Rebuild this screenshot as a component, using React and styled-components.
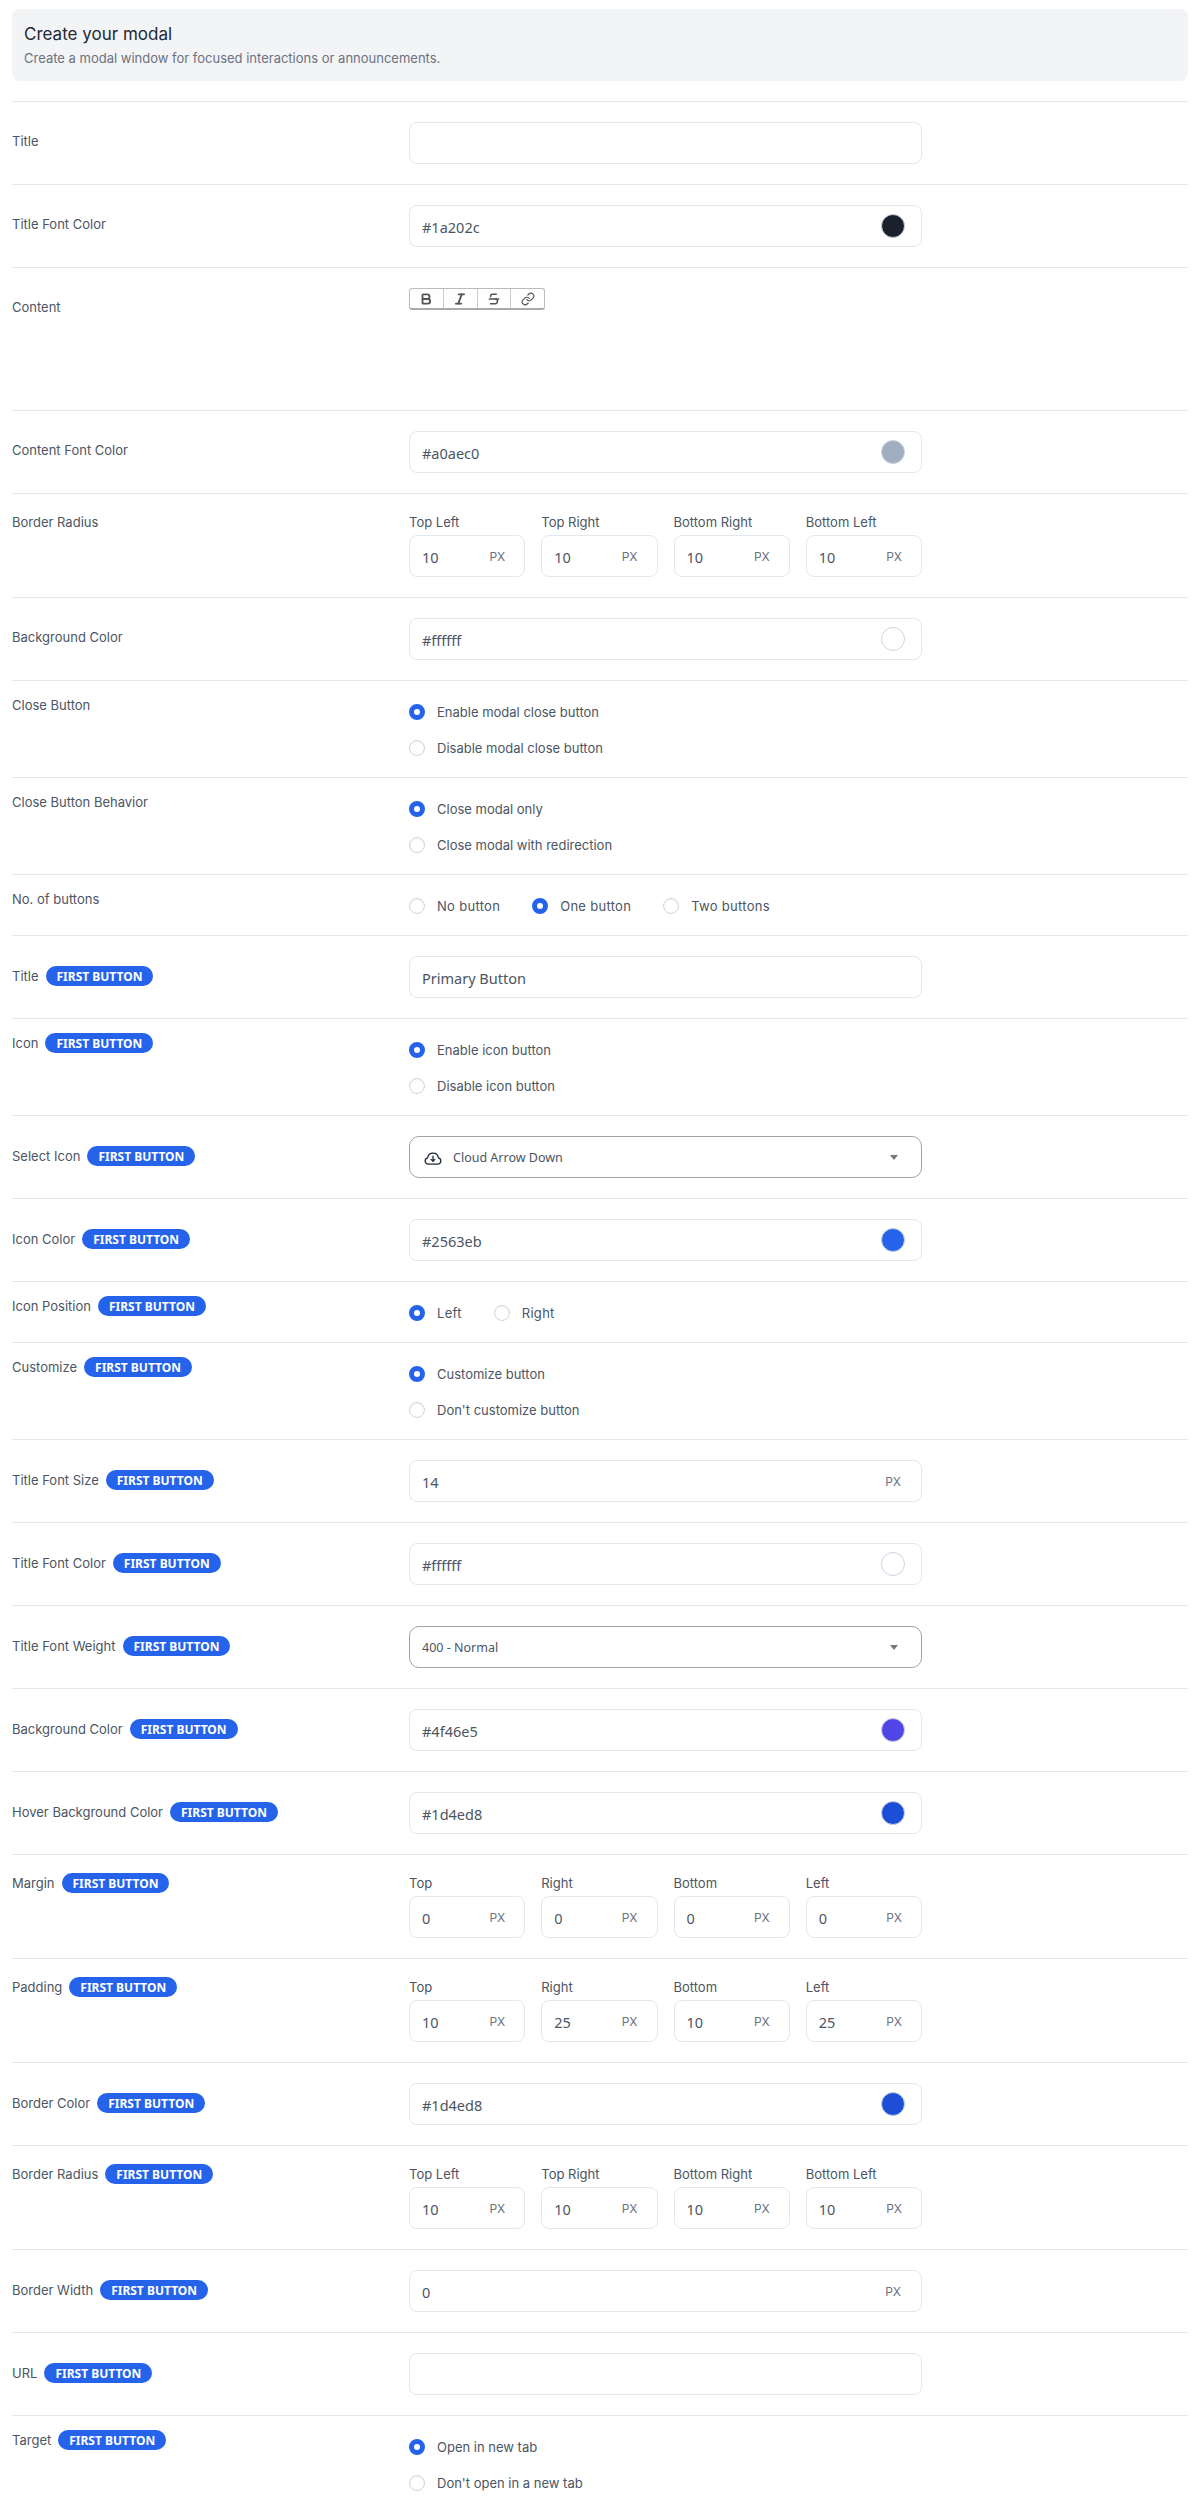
import styled, { createGlobalStyle } from 'styled-components'
import { Bold, Italic, Strikethrough, Link } from 'lucide-react'

const GlobalStyle = createGlobalStyle`
  * {
    box-sizing: border-box;
  }
  body {
    margin: 0;
    background: #fff;
    font-family: Inter, "Liberation Sans", sans-serif;
    color: #4b5563;
  }
`

const Page = styled.div`
  padding: 9px 11px 0 12px;
`

const Header = styled.div`
  background: #f3f4f6;
  border-radius: 8px;
  padding: 14px 12px;
  height: 72px;
  margin-bottom: 20px;
`

const HeaderTitle = styled.h1`
  margin: 0;
  font-size: 17px;
  line-height: 22px;
  font-weight: 400;
  color: #1f2937;
`

const HeaderText = styled.p`
  margin: 3px 0 0;
  font-size: 13px;
  line-height: 20px;
  color: #6b7280;
`

const paddings = {
  input: '20px 0',
  options: '14px 0 19px',
  group: '18px 0 20px',
}

const Row = styled.div`
  display: grid;
  grid-template-columns: 397px 513px;
  border-top: 1px solid #e5e7eb;
  padding: ${(p) => paddings[p.$kind]};
`

const Label = styled.div`
  display: flex;
  align-items: center;
  gap: 7px;
  height: 20px;
  margin-top: ${(p) => (p.$kind !== 'input' ? '0' : p.$first ? '10px' : '9px')};
  font-size: 13px;
  color: #4b5563;
`

const Badge = styled.span`
  display: inline-flex;
  align-items: center;
  height: 20px;
  padding: 0 11px;
  border-radius: 10px;
  background: #2563eb;
  color: #fff;
  font-family: "Noto Sans", sans-serif;
  font-size: 12px;
  font-weight: 700;
`

const Box = styled.div`
  display: flex;
  align-items: center;
  justify-content: space-between;
  width: ${(p) => (p.$small ? '100%' : '512.5px')};
  height: 42px;
  padding: 0 ${(p) => (p.$small ? '19px' : '19.5px')} 0 12px;
  background: #fff;
  border: 1px solid #e2e8f0;
  border-radius: 8px;
`

const Value = styled.span`
  font-family: "Noto Sans", sans-serif;
  font-size: 14.5px;
  line-height: 20px;
  padding-top: 2px;
  color: #4b5563;
`

const Unit = styled.span`
  font-size: 12px;
  color: #6b7280;
`

const Swatch = styled.span`
  width: 24px;
  height: 24px;
  margin-right: -4px;
  border-radius: 50%;
  border: 1px solid #cbd5e1;
  background: ${(p) => p.$color};
`

const Grid = styled.div`
  display: grid;
  grid-template-columns: repeat(4, 1fr);
  gap: 16px;
`

const GroupLabel = styled.div`
  height: 20px;
  margin-bottom: 3px;
  font-size: 13px;
  line-height: 20px;
  color: #4b5563;
`

const Options = styled.div`
  display: flex;
  flex-direction: ${(p) => (p.$inline ? 'row' : 'column')};
  gap: ${(p) => (p.$inline ? '32px' : '16px')};
  margin-top: 7px;
  letter-spacing: ${(p) => (p.$inline ? '0.3px' : '0')};
`

const Option = styled.div`
  display: flex;
  align-items: center;
  gap: 12px;
  height: 20px;
  font-size: 13px;
  color: #4b5563;
`

const Radio = styled.span`
  width: 16px;
  height: 16px;
  border-radius: 50%;
  background: #fff;
  border: ${(p) => (p.$on ? '5px solid #2563eb' : '1px solid #d1d5db')};
  box-shadow: ${(p) => (p.$on ? 'none' : 'inset 0 1px 2px rgba(0, 0, 0, 0.06)')};
`

const Select = styled(Box)`
  border-color: #a3a3a3;
  border-radius: 10px;
  padding-right: 22.5px;
`

const SelectValue = styled.span`
  display: flex;
  align-items: center;
  gap: 11px;
  padding-top: 1px;
  font-family: "Noto Sans", sans-serif;
  font-size: 12.5px;
  color: #4b5563;
`

const CloudSvg = styled.svg`
  margin-left: 2px;
`

const Caret = styled.span`
  width: 0;
  height: 0;
  border-left: 4px solid transparent;
  border-right: 4px solid transparent;
  border-top: 5px solid #777;
`

const Toolbar = styled.div`
  display: flex;
  width: 136px;
  height: 22px;
  margin-bottom: 80px;
  border: 1px solid #bbb;
  border-bottom: 2px solid #aaa;
  border-radius: 3px;
`

const ToolButton = styled.span`
  flex: 1;
  display: flex;
  align-items: center;
  justify-content: center;
  color: #555;
  & + & {
    border-left: 1px solid #ccc;
  }
`

const CloudIcon = () => (
  <CloudSvg width="18" height="18" viewBox="0 0 16 16" fill="none" stroke="#1f2937" strokeWidth="1.15" strokeLinecap="round" strokeLinejoin="round">
    <path d="M4.2 13.5H3.8A2.9 2.9 0 0 1 3.2 7.8 4.85 4.85 0 0 1 12.8 7.8 2.9 2.9 0 0 1 12.2 13.5H4.2Z" />
    <path d="M8 6.4V10.8M6.3 9.2 8 10.9 9.7 9.2" />
  </CloudSvg>
)

const FieldLabel = ({ kind, first, children }) => (
  <Label $kind={kind} $first={first}>
    {children}
    {first && <Badge>FIRST BUTTON</Badge>}
  </Label>
)

const TextRow = ({ label, first, value, unit }) => (
  <Row $kind="input">
    <FieldLabel kind="input" first={first}>{label}</FieldLabel>
    <Box>
      <Value>{value}</Value>
      {unit && <Unit>PX</Unit>}
    </Box>
  </Row>
)

const ColorRow = ({ label, first, value }) => (
  <Row $kind="input">
    <FieldLabel kind="input" first={first}>{label}</FieldLabel>
    <Box>
      <Value>{value}</Value>
      <Swatch $color={value} />
    </Box>
  </Row>
)

const SelectRow = ({ label, first, icon, value }) => (
  <Row $kind="input">
    <FieldLabel kind="input" first={first}>{label}</FieldLabel>
    <Select>
      <SelectValue>
        {icon && <CloudIcon />}
        {value}
      </SelectValue>
      <Caret />
    </Select>
  </Row>
)

const GroupRow = ({ label, first, items }) => (
  <Row $kind="group">
    <FieldLabel kind="group" first={first}>{label}</FieldLabel>
    <Grid>
      {items.map(([name, value]) => (
        <div key={name}>
          <GroupLabel>{name}</GroupLabel>
          <Box $small>
            <Value>{value}</Value>
            <Unit>PX</Unit>
          </Box>
        </div>
      ))}
    </Grid>
  </Row>
)

const RadioRow = ({ label, first, inline, options, selected }) => (
  <Row $kind="options">
    <FieldLabel kind="options" first={first}>{label}</FieldLabel>
    <Options $inline={inline}>
      {options.map((name, i) => (
        <Option key={name}>
          <Radio $on={i === selected} />
          {name}
        </Option>
      ))}
    </Options>
  </Row>
)

const radius = (v) => [['Top Left', v], ['Top Right', v], ['Bottom Right', v], ['Bottom Left', v]]
const sides = (a, b) => [['Top', a], ['Right', b], ['Bottom', a], ['Left', b]]

const App = () => (
  <Page>
    <GlobalStyle />
    <Header>
      <HeaderTitle>Create your modal</HeaderTitle>
      <HeaderText>Create a modal window for focused interactions or announcements.</HeaderText>
    </Header>

    <TextRow label="Title" />
    <ColorRow label="Title Font Color" value="#1a202c" />
    <Row $kind="input">
      <FieldLabel kind="input">Content</FieldLabel>
      <Toolbar>
        <ToolButton><Bold size={14} strokeWidth={3.2} /></ToolButton>
        <ToolButton><Italic size={14} strokeWidth={3.2} /></ToolButton>
        <ToolButton><Strikethrough size={14} strokeWidth={2.6} /></ToolButton>
        <ToolButton><Link size={14} strokeWidth={2} /></ToolButton>
      </Toolbar>
    </Row>
    <ColorRow label="Content Font Color" value="#a0aec0" />
    <GroupRow label="Border Radius" items={radius(10)} />
    <ColorRow label="Background Color" value="#ffffff" />
    <RadioRow label="Close Button" options={['Enable modal close button', 'Disable modal close button']} selected={0} />
    <RadioRow label="Close Button Behavior" options={['Close modal only', 'Close modal with redirection']} selected={0} />
    <RadioRow label="No. of buttons" inline options={['No button', 'One button', 'Two buttons']} selected={1} />

    <TextRow label="Title" first value="Primary Button" />
    <RadioRow label="Icon" first options={['Enable icon button', 'Disable icon button']} selected={0} />
    <SelectRow label="Select Icon" first icon value="Cloud Arrow Down" />
    <ColorRow label="Icon Color" first value="#2563eb" />
    <RadioRow label="Icon Position" first inline options={['Left', 'Right']} selected={0} />
    <RadioRow label="Customize" first options={['Customize button', "Don't customize button"]} selected={0} />
    <TextRow label="Title Font Size" first value="14" unit />
    <ColorRow label="Title Font Color" first value="#ffffff" />
    <SelectRow label="Title Font Weight" first value="400 - Normal" />
    <ColorRow label="Background Color" first value="#4f46e5" />
    <ColorRow label="Hover Background Color" first value="#1d4ed8" />
    <GroupRow label="Margin" first items={sides(0, 0)} />
    <GroupRow label="Padding" first items={sides(10, 25)} />
    <ColorRow label="Border Color" first value="#1d4ed8" />
    <GroupRow label="Border Radius" first items={radius(10)} />
    <TextRow label="Border Width" first value="0" unit />
    <TextRow label="URL" first />
    <RadioRow label="Target" first options={['Open in new tab', "Don't open in a new tab"]} selected={0} />
  </Page>
)

export default App
